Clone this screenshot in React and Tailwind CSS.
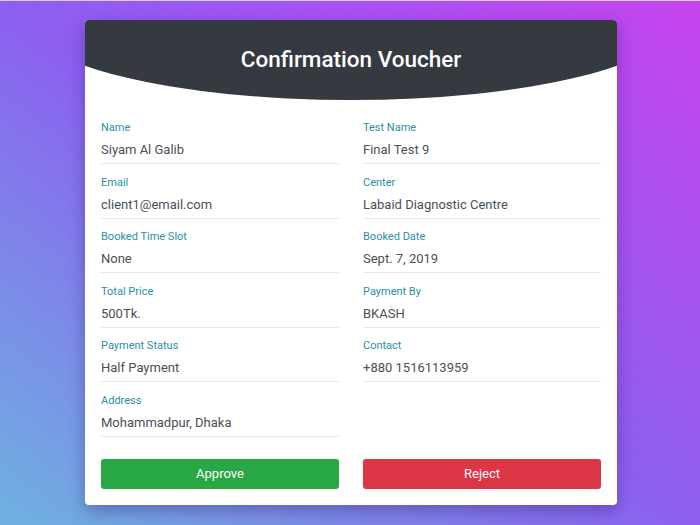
const fields = [
  ["Name", "Siyam Al Galib"],
  ["Test Name", "Final Test 9"],
  ["Email", "client1@email.com"],
  ["Center", "Labaid Diagnostic Centre"],
  ["Booked Time Slot", "None"],
  ["Booked Date", "Sept. 7, 2019"],
  ["Total Price", "500Tk."],
  ["Payment By", "BKASH"],
  ["Payment Status", "Half Payment"],
  ["Contact", "+880 1516113959"],
  ["Address", "Mohammadpur, Dhaka"],
];

const Field = ({ label, value }) => (
  <div className="mb-[10.6px] border-b border-[#e6e8eb] pb-[3px]">
    <div className="text-[11px] leading-[15px] text-[#2b90a3]">{label}</div>
    <div className="mt-[5px] text-[13px] leading-[20px] text-[#4a5057]">{value}</div>
  </div>
);

export default function App() {
  return (
    <div
      className="h-[525px] w-[700px] overflow-hidden border-t border-[#d4d4d8] bg-[linear-gradient(to_top_right,#6eb2e0_0%,#8c5ff0_50%,#c643f0_100%)]"
      style={{ fontFamily: "Roboto, 'Noto Sans', sans-serif" }}
    >
      <div className="ml-[85px] mt-[19px] w-[532px] overflow-hidden rounded-[4px] bg-white shadow-[0_6px_16px_rgba(40,20,90,0.35)]">
        <div className="flex h-[80px] justify-center bg-[#343a40] pt-[25px] [clip-path:ellipse(324px_80px_at_50%_0)]">
          <h1 className="text-[22.5px] font-medium leading-[28px] text-white">Confirmation Voucher</h1>
        </div>

        <div className="px-4 pb-[16px] pt-[20px]">
          <div className="grid grid-cols-2 gap-x-6">
            {fields.map(([label, value]) => (
              <Field key={label} label={label} value={value} />
            ))}
          </div>

          <div className="mt-[11.4px] grid grid-cols-2 gap-x-6">
            <button className="h-[30px] rounded-[3px] bg-[#28a745] text-[13px] text-white">Approve</button>
            <button className="h-[30px] rounded-[3px] bg-[#dc3545] text-[13px] text-white">Reject</button>
          </div>
        </div>
      </div>
    </div>
  );
}
